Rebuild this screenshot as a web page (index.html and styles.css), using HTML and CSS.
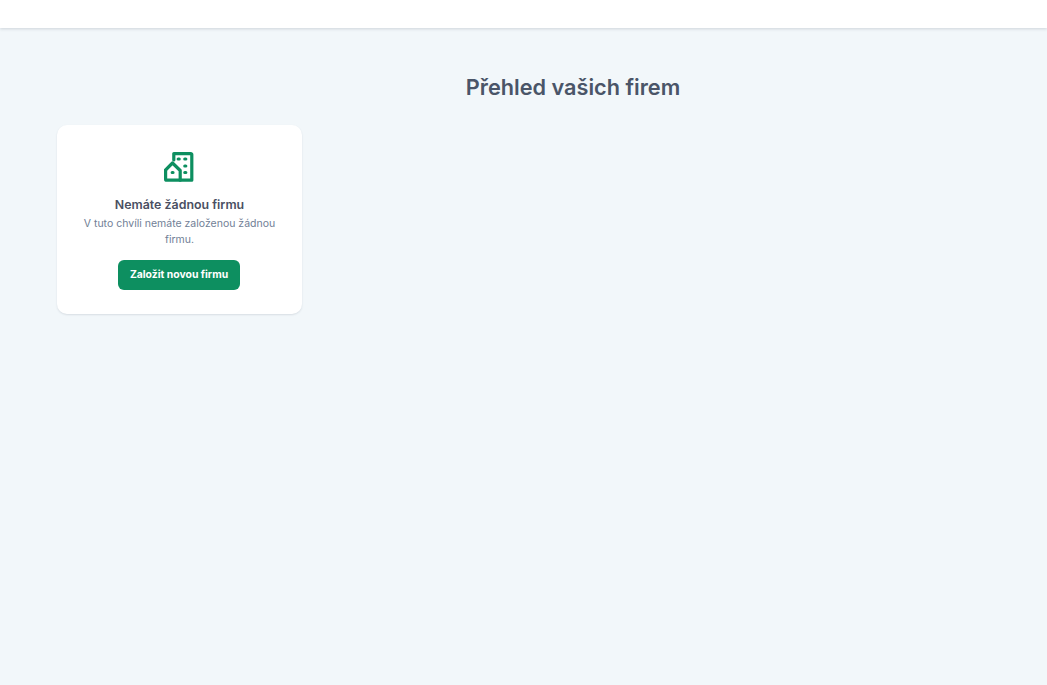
FILE: index.html
```html
<!DOCTYPE html>
<html lang="cs">
	<head>
		<meta charset="UTF-8" />
		<meta name="viewport" content="width=device-width, initial-scale=1.0" />
		<title>Přehled vašich firem</title>
		<link rel="stylesheet" href="styles.css">
	</head>
	<body>
		<header class="topbar"></header>

		<main class="content">
			<h1 class="page-title">Přehled vašich firem</h1>

			<div class="company-card">
				<svg class="company-icon" viewBox="0 0 30 30" width="30" height="30" fill="none" stroke="#0d8f60" stroke-width="3.2" stroke-linejoin="round" stroke-linecap="round">
					<path d="M9.8 8V1.6h17a1 1 0 0 1 1 1v25.6H2.6a1 1 0 0 1-1-1V18.5" />
					<path d="M1 18.5 8.5 11l7.7 7.5v9.7" />
					<path d="M14.2 7h1M20.8 7h1M20.8 14h1M20.8 20.5h1M8.2 20.5h.8" />
				</svg>
				<h2 class="card-title">Nemáte žádnou firmu</h2>
				<p class="card-text">V tuto chvíli nemáte založenou žádnou firmu.</p>
				<button class="primary-btn">Založit novou firmu</button>
			</div>
		</main>
	</body>
</html>
```

FILE: styles.css
```css
* {
	box-sizing: border-box;
}
html,
body {
	height: 100%;
}
body {
	margin: 0;
	background-color: #f2f7fa;
	font-family: Inter, "Liberation Sans", sans-serif;
	overflow: hidden;
}
.topbar {
	height: 28px;
	background-color: #fff;
	box-shadow: 0 1px 3px rgba(60, 70, 90, 0.2);
}
.content {
	padding: 44px 0 0 57px;
}
.page-title {
	margin: 0 0 23px 42px;
	text-align: center;
	font-size: 21.7px;
	line-height: 30px;
	font-weight: 600;
	color: #4a5568;
}
.company-card {
	display: flex;
	flex-direction: column;
	align-items: center;
	width: 245px;
	height: 189px;
	padding: 27px 20px 0;
	background-color: #fff;
	border-radius: 10px;
	box-shadow: 0 1px 2px rgba(60, 70, 90, 0.14);
}
.company-icon {
	display: block;
	margin-left: -1px;
}
.card-title {
	margin: 14px 0 0;
	font-size: 12.4px;
	line-height: 18px;
	font-weight: 600;
	color: #4a4f62;
}
.card-text {
	margin: 2px 0 0;
	text-align: center;
	font-size: 10.5px;
	line-height: 16px;
	color: #718096;
}
.primary-btn {
	margin: 12px 0 0 -2px;
	width: 122px;
	height: 30px;
	padding: 0 0 2px 1px;
	border: 0;
	border-radius: 6px;
	background-color: #0d8f60;
	color: #fff;
	font-family: Inter, sans-serif;
	font-size: 10.4px;
	font-weight: 700;
}
```
